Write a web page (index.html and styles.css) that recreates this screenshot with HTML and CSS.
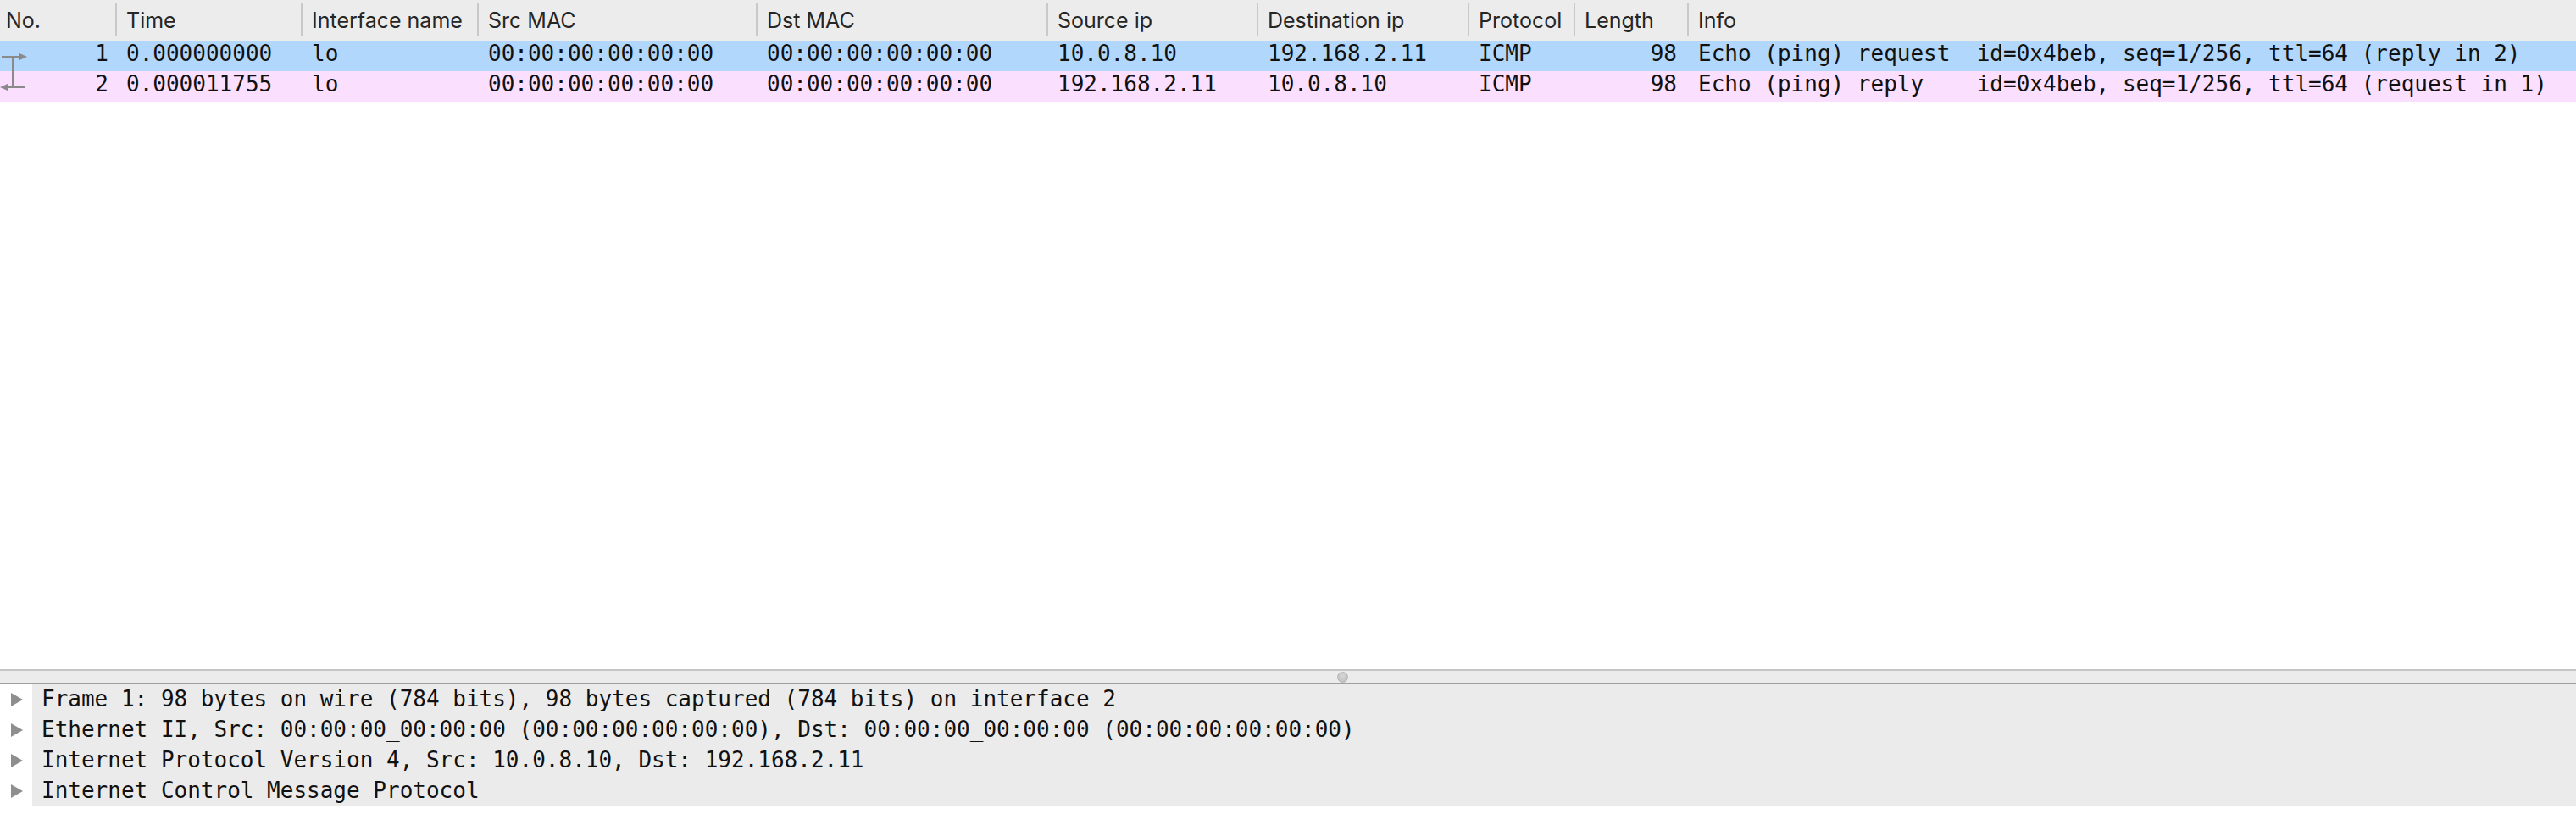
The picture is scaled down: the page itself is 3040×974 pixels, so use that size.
FILE: index.html
```html
<!DOCTYPE html>
<html>
<head>
<meta charset="utf-8">
<link rel="stylesheet" href="styles.css">
</head>
<body>
<div class="app">
  <div class="plist">
    <div class="prow phead">
      <div class="hc c-first">No.</div>
      <div class="hc">Time</div>
      <div class="hc">Interface name</div>
      <div class="hc">Src MAC</div>
      <div class="hc">Dst MAC</div>
      <div class="hc">Source ip</div>
      <div class="hc">Destination ip</div>
      <div class="hc">Protocol</div>
      <div class="hc">Length</div>
      <div class="hc">Info</div>
    </div>
    <div class="prow pkt sel">
      <div class="pc c-no">
        <svg class="rel" width="36" height="36" viewBox="0 0 36 36"><line x1="2" y1="19" x2="24" y2="19"/><line x1="15" y1="19" x2="15" y2="36"/><polygon points="22,14.5 32,19 22,23.5"/></svg>
        <span>1</span>
      </div>
      <div class="pc">0.000000000</div>
      <div class="pc">lo</div>
      <div class="pc">00:00:00:00:00:00</div>
      <div class="pc">00:00:00:00:00:00</div>
      <div class="pc">10.0.8.10</div>
      <div class="pc">192.168.2.11</div>
      <div class="pc">ICMP</div>
      <div class="pc c-len">98</div>
      <div class="pc c-info">Echo (ping) request  id=0x4beb, seq=1/256, ttl=64 (reply in 2)</div>
    </div>
    <div class="prow pkt icmp">
      <div class="pc c-no">
        <svg class="rel" width="36" height="36" viewBox="0 0 36 36"><line x1="15" y1="0" x2="15" y2="19"/><line x1="8" y1="19" x2="30" y2="19"/><polygon points="0,19 10,14.5 10,23.5"/></svg>
        <span>2</span>
      </div>
      <div class="pc">0.000011755</div>
      <div class="pc">lo</div>
      <div class="pc">00:00:00:00:00:00</div>
      <div class="pc">00:00:00:00:00:00</div>
      <div class="pc">192.168.2.11</div>
      <div class="pc">10.0.8.10</div>
      <div class="pc">ICMP</div>
      <div class="pc c-len">98</div>
      <div class="pc c-info">Echo (ping) reply    id=0x4beb, seq=1/256, ttl=64 (request in 1)</div>
    </div>
  </div>
  <div class="splitter"><span class="handle"></span></div>
  <div class="tree">
    <div class="trow"><span class="twisty"><span class="tri"></span></span><span class="tlabel">Frame 1: 98 bytes on wire (784 bits), 98 bytes captured (784 bits) on interface 2</span></div>
    <div class="trow"><span class="twisty"><span class="tri"></span></span><span class="tlabel">Ethernet II, Src: 00:00:00_00:00:00 (00:00:00:00:00:00), Dst: 00:00:00_00:00:00 (00:00:00:00:00:00)</span></div>
    <div class="trow"><span class="twisty"><span class="tri"></span></span><span class="tlabel">Internet Protocol Version 4, Src: 10.0.8.10, Dst: 192.168.2.11</span></div>
    <div class="trow"><span class="twisty"><span class="tri"></span></span><span class="tlabel">Internet Control Message Protocol</span></div>
  </div>
  <div class="foot"></div>
</div>
</body>
</html>
```

FILE: styles.css
```css
html, body {
  margin: 0;
  padding: 0;
  background: #ffffff;
}

.app {
  display: flex;
  flex-direction: column;
  width: 3040px;
  height: 974px;
  overflow: hidden;
}

.plist {
  flex: 1;
  display: flex;
  flex-direction: column;
  background: #ffffff;
}

.prow {
  display: grid;
  grid-template-columns: 136px 219px 208px 329px 343px 248px 249px 125px 134px 1fr;
}

.phead {
  height: 48px;
  background: #ececec;
}

.hc {
  font-family: "Inter", "Liberation Sans", sans-serif;
  font-size: 25px;
  color: #262626;
  line-height: 48px;
  padding-left: 13px;
  white-space: nowrap;
  background: linear-gradient(#c9c9c9, #c9c9c9) no-repeat left 0 top 3px / 2px 40px;
}

.hc.c-first {
  padding-left: 7px;
  background: none;
}

.pkt {
  height: 36px;
  font-family: "DejaVu Sans Mono", "Liberation Mono", monospace;
  font-size: 26px;
  line-height: 30px;
  color: #111111;
}

.sel {
  background: #b1d7fd;
}

.icmp {
  background: #fbdffe;
}

.pc {
  padding-left: 13px;
  white-space: pre;
  overflow: hidden;
}

.c-no {
  display: flex;
  justify-content: space-between;
  padding-left: 0;
  padding-right: 8px;
}

.rel {
  display: block;
  flex: none;
}

.rel line {
  stroke: #8a8a8a;
  stroke-width: 2;
}

.rel polygon {
  fill: #8a8a8a;
}

.c-len {
  text-align: right;
  padding-right: 12px;
}

.splitter {
  height: 14px;
  border-top: 2px solid #c6c6c6;
  border-bottom: 2px solid #9e9e9e;
  background: #ececec;
  display: flex;
  align-items: center;
}

.handle {
  width: 11px;
  height: 11px;
  margin-left: 1578px;
  border-radius: 50%;
  background: radial-gradient(circle at 50% 35%, #d6d6d6, #bcbcbc);
  border: 1px solid #b4b4b4;
}

.tree {
  display: flex;
  flex-direction: column;
  background: #ebebeb;
}

.trow {
  display: flex;
  height: 36px;
}

.twisty {
  width: 38px;
  flex: none;
  background: #ffffff;
  display: flex;
  align-items: center;
  padding-left: 13px;
  box-sizing: border-box;
}

.tri {
  width: 0;
  height: 0;
  border-top: 8.5px solid transparent;
  border-bottom: 8.5px solid transparent;
  border-left: 14px solid #8e8e8e;
}

.tlabel {
  flex: 1;
  padding-left: 11px;
  font-family: "DejaVu Sans Mono", "Liberation Mono", monospace;
  font-size: 26px;
  line-height: 34px;
  color: #111111;
  white-space: pre;
}

.foot {
  height: 22px;
  background: #ffffff;
}
```
